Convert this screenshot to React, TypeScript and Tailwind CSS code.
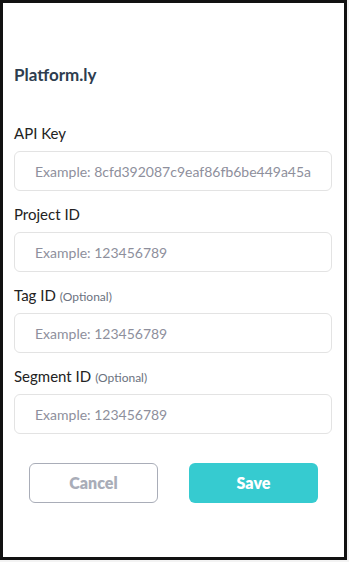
const fields = [
    { label: "API Key", optional: false, placeholder: "Example: 8cfd392087c9eaf86fb6be449a45a" },
    { label: "Project ID", optional: false, placeholder: "Example: 123456789" },
    { label: "Tag ID", optional: true, placeholder: "Example: 123456789" },
    { label: "Segment ID", optional: true, placeholder: "Example: 123456789" },
];

export default function App() {
    return (
        <div className="w-[349px] h-[562px] bg-[#f3f3f3]" style={{ fontFamily: "Lato, 'Open Sans', sans-serif" }}>
            <div className="w-[347px] h-[560px] border-[3px] border-[#111] bg-white px-[11px]">
                <h1 className="mt-[62px] text-[17px] font-bold text-[#2e3d4f] leading-[20px]">Platform.ly</h1>

                <div className="mt-[39px] flex flex-col gap-[14px]">
                    {fields.map((f) => (
                        <div key={f.label}>
                            <label className="flex items-baseline h-[18px] text-[15px] text-[#222] leading-[18px]">
                                {f.label}
                                {f.optional && <span className="ml-1 text-[12px] leading-none text-[#6b7280]">(Optional)</span>}
                            </label>
                            <input
                                className="mt-[9px] block w-[318px] h-[40px] rounded-[6px] border border-[#e3e3e3] px-[20px] text-[14px] placeholder:text-[#8e8f9c] outline-none"
                                placeholder={f.placeholder}
                            />
                        </div>
                    ))}
                </div>

                <div className="mt-[29px] flex justify-between px-[15px]">
                    <button className="w-[129px] h-[40px] rounded-[6px] border border-[#a9adb8] text-[16px] font-extrabold text-[#a9adb8]">
                        Cancel
                    </button>
                    <button className="w-[129px] h-[40px] rounded-[6px] bg-[#36cbd0] text-[16px] font-extrabold text-white">
                        Save
                    </button>
                </div>
            </div>
        </div>
    );
}
